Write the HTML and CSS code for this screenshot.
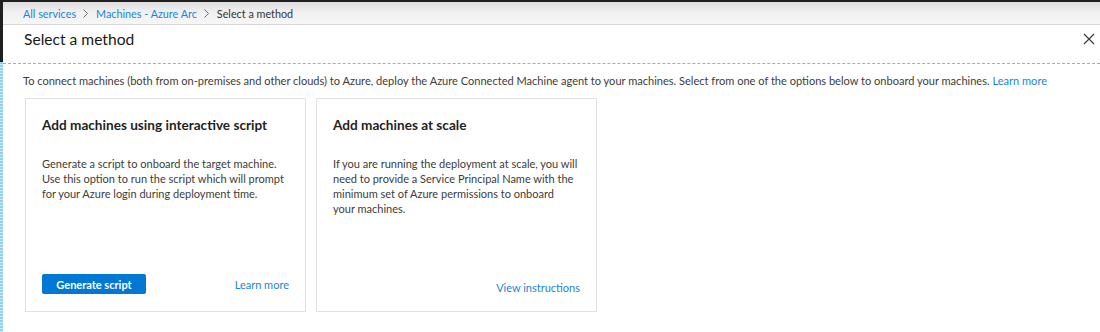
FILE: index.html
```html
<!DOCTYPE html>
<html lang="en">
<head>
<meta charset="utf-8">
<title>Select a method</title>
<link rel="stylesheet" href="styles.css">
</head>
<body>
<div class="edge">
  <div class="edge-dark"></div>
  <div class="edge-dots"></div>
</div>
<div class="main">
  <nav class="crumbs">
    <a href="#" class="crumb-link">All services</a>
    <svg class="sep" width="5" height="9" viewBox="0 0 5 9"><path d="M0.5 0.5L4.5 4.5L0.5 8.5" stroke="#6e6e6e" stroke-width="1" fill="none"/></svg>
    <a href="#" class="crumb-link">Machines - Azure Arc</a>
    <svg class="sep" width="5" height="9" viewBox="0 0 5 9"><path d="M0.5 0.5L4.5 4.5L0.5 8.5" stroke="#6e6e6e" stroke-width="1" fill="none"/></svg>
    <span class="crumb-current">Select a method</span>
  </nav>
  <header class="blade-head">
    <h1 class="blade-title">Select a method</h1>
    <button class="close" aria-label="Close">
      <svg width="12" height="12" viewBox="0 0 12 12"><path d="M1 1L11 11M11 1L1 11" stroke="#3b3b3b" stroke-width="1.2" fill="none"/></svg>
    </button>
  </header>
  <section class="content">
    <p class="intro">To connect machines (both from on-premises and other clouds) to Azure, deploy the Azure Connected Machine agent to your machines. Select from one of the options below to onboard your machines. <a href="#" class="link">Learn more</a></p>
    <div class="cards">
      <div class="card">
        <h2 class="card-title">Add machines using interactive script</h2>
        <p class="card-text">Generate a script to onboard the target machine. Use this option to run the script which will prompt for your Azure login during deployment time.</p>
        <div class="card-foot">
          <button class="btn">Generate script</button>
          <a href="#" class="link">Learn more</a>
        </div>
      </div>
      <div class="card">
        <h2 class="card-title">Add machines at scale</h2>
        <p class="card-text">If you are running the deployment at scale, you will need to provide a Service Principal Name with the minimum set of Azure permissions to onboard <span class="nowrap">your machines.</span></p>
        <div class="card-foot end">
          <a href="#" class="link">View instructions</a>
        </div>
      </div>
    </div>
  </section>
</div>
</body>
</html>
```
FILE: styles.css
```css
html, body { height: 100%; }
body {
  margin: 0;
  display: flex;
  background: #fff;
  font-family: Lato, "Open Sans", sans-serif;
  font-size: 11px;
  color: #3c3c3c;
  overflow: hidden;
}
.edge {
  width: 3px;
  display: flex;
  flex-direction: column;
  flex: none;
}
.edge-dark {
  height: 62px;
  background: #1f1f1f;
}
.edge-dots {
  flex: 1;
  background: repeating-linear-gradient(180deg, #8fd0ee 0 2px, #d6eef9 2px 3px);
}
.main {
  flex: 1;
  display: flex;
  flex-direction: column;
  min-width: 0;
}
.crumbs {
  border-top: 2px solid #1f1f1f;
  border-bottom: 1px solid #d6d6d6;
  background: linear-gradient(180deg, #dedede 0%, #f0f0f0 45%, #f6f6f6 100%);
  display: flex;
  align-items: center;
  padding-left: 20px;
  padding-top: 1px;
  box-sizing: border-box;
  height: 25px;
  font-size: 10.8px;
}
.crumb-link {
  color: #1b84d8;
  text-decoration: none;
}
.sep {
  margin: 0 8px 0 7px;
  flex: none;
}
.crumb-current { color: #333; }
.blade-head {
  height: 38px;
  box-sizing: border-box;
  display: flex;
  align-items: center;
  justify-content: space-between;
  padding: 0 5px 10px 21px;
}
.blade-title {
  margin: 0;
  font-size: 15.6px;
  font-weight: 400;
  color: #1a1a1a;
}
.close {
  border: 0;
  background: none;
  padding: 0;
  width: 12px;
  height: 12px;
  display: flex;
}
.content {
  border-top: 1px dashed #63c3ea;
  padding: 10px 0 0 20px;
}
.intro {
  margin: 0;
  line-height: 14px;
  white-space: nowrap;
  font-size: 11.05px;
}
.link {
  color: #1b84d8;
  text-decoration: none;
}
.cards {
  display: flex;
  gap: 10px;
  margin: 10px 0 0 2px;
}
.card {
  width: 247px;
  height: 178px;
  border: 1px solid #e1e1e1;
  padding: 17px 16px 17px 16px;
  display: flex;
  flex-direction: column;
}
.card-title {
  margin: 0;
  font-size: 13.6px;
  font-weight: 700;
  color: #1f1f1f;
  line-height: 18px;
}
.card-text {
  margin: 22px 0 0 0;
  line-height: 15px;
}
.nowrap { white-space: nowrap; }
.card-foot {
  margin-top: auto;
  display: flex;
  align-items: center;
  justify-content: space-between;
}
.card-foot.end { justify-content: flex-end; }
.btn {
  width: 104px;
  height: 20px;
  border: 0;
  border-radius: 2px;
  background: #0078d4;
  color: #fff;
  font-family: inherit;
  font-size: 11px;
  font-weight: 700;
  padding: 0;
}
```
